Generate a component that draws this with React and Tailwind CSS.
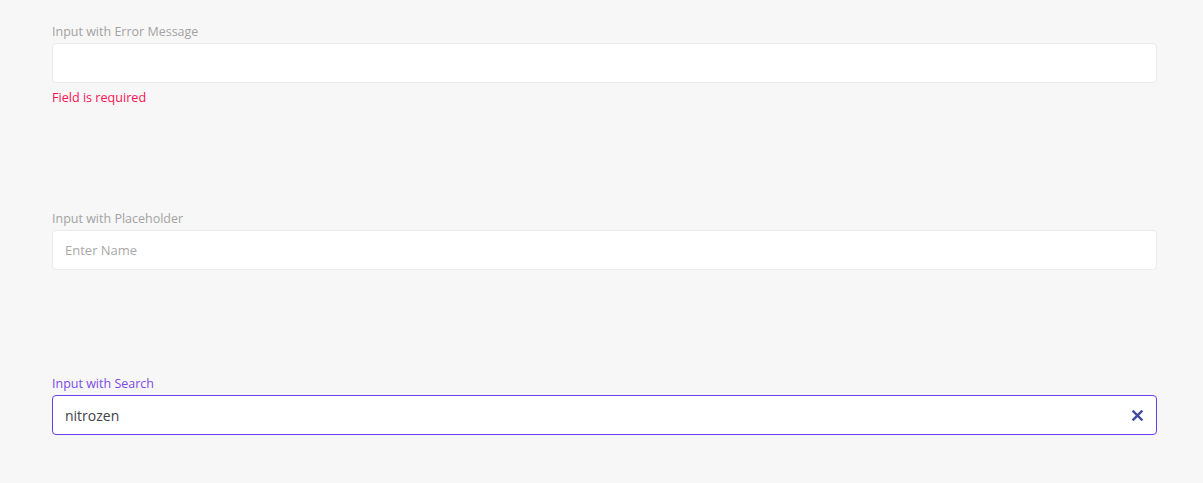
import { useState } from "react";

const font = { fontFamily: '"Open Sans", "Noto Sans", sans-serif' };

function Field({ label, error, active, className = "", children }) {
  return (
    <div className={"flex flex-col " + className}>
      <label
        className={
          "text-[12.5px] leading-[18px] mb-[2px] " +
          (active ? "text-[#7c4ae8]" : "text-[#a3a3a3]")
        }
      >
        {label}
      </label>
      {children}
      {error && (
        <p className="mt-[6px] -mb-[1px] text-[12.6px] leading-[18px] text-[#fa1155]">
          {error}
        </p>
      )}
    </div>
  );
}

export default function App() {
  const [search, setSearch] = useState("nitrozen");

  return (
    <div
      className="min-h-screen bg-[#f7f7f7] pl-[52px] pr-[46px] pt-[23px]"
      style={font}
    >
      <div className="flex flex-col">
        <Field label="Input with Error Message" error="Field is required">
          <input
            className="h-10 w-full rounded-[4px] border border-[#ebebeb] bg-white px-3 text-[13px] outline-none"
            type="text"
          />
        </Field>

        <Field label="Input with Placeholder" className="mt-[104px]">
          <input
            className="h-10 w-full rounded-[4px] border border-[#ebebeb] bg-white px-3 text-[13px] text-[#41434c] placeholder:text-[#a8a8a8] outline-none"
            type="text"
            placeholder="Enter Name"
          />
        </Field>

        <Field label="Input with Search" active className="mt-[105px]">
          <div className="flex h-10 w-full items-center rounded-[4px] border border-[#6b3ee8] bg-white pl-3 pr-[11px]">
            <input
              className="flex-1 bg-transparent text-[14px] text-[#41434c] outline-none"
              type="text"
              value={search}
              onChange={(e) => setSearch(e.target.value)}
            />
            <button
              className="flex h-4 w-4 items-center justify-center"
              onClick={() => setSearch("")}
            >
              <svg width="11" height="11" viewBox="0 0 11 11">
                <path
                  d="M1.5 1.5 L9.5 9.5 M9.5 1.5 L1.5 9.5"
                  stroke="#3d4a99"
                  strokeWidth="2.4"
                  strokeLinecap="square"
                />
              </svg>
            </button>
          </div>
        </Field>
      </div>
    </div>
  );
}
